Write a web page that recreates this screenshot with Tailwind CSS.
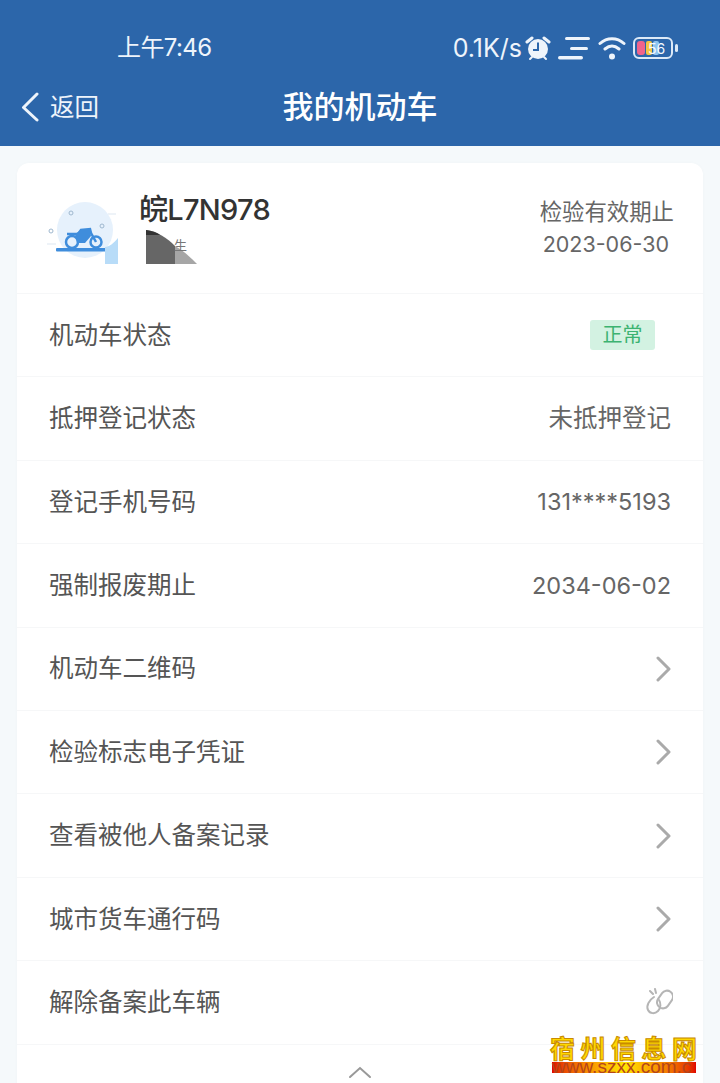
<!DOCTYPE html>
<html lang="zh-CN">
<head>
  <meta charset="UTF-8" />
  <title>我的机动车</title>
  <script src="https://cdn.jsdelivr.net/npm/@tailwindcss/browser@4"></script>
</head>
<body class="bg-[#f5f9fb] h-[1083px] overflow-hidden relative font-['Inter','Noto_Sans_CJK_SC',sans-serif] text-[#555]">

  <!-- header -->
  <header class="bg-[#2c66aa] h-[146px] text-white relative">
    <div class="h-[68px] pt-[28px] pl-[117px] pr-[41px] flex items-center justify-between text-[#eef4fb]">
      <span class="text-[24px] leading-none tracking-[-0.6px]">上午7:46</span>
      <div class="flex items-center">
        <span class="text-[25px] leading-none">0.1K/s</span>
        <svg class="ml-[3px] w-[26px] h-[26px]" viewBox="0 0 26 26">
          <circle cx="13" cy="14" r="10" fill="#eef4fb"/>
          <path d="M2 7l5-4M24 7l-5-4" stroke="#eef4fb" stroke-width="3" stroke-linecap="round"/>
          <path d="M5 24l2-2M21 24l-2-2" stroke="#eef4fb" stroke-width="2" stroke-linecap="round"/>
          <path d="M13 7.500V15H8" fill="none" stroke="#2c66aa" stroke-width="2"/>
        </svg>
        <svg class="ml-[7px] w-[33px] h-[26px]" viewBox="0 0 33 26">
          <rect x="7" y="2" width="25" height="3" rx="1.500" fill="#eef4fb"/>
          <rect x="12" y="12" width="18" height="3" rx="1.500" fill="#eef4fb"/>
          <rect x="0" y="21" width="25" height="3.500" rx="1.700" fill="#eef4fb"/>
        </svg>
        <svg class="ml-[7px] w-[28px] h-[26px]" viewBox="0 0 28 26">
          <path d="M2 8.500C9 2 19 2 26 8.500M7 14c4.500-3.800 9.500-3.800 14 0" fill="none" stroke="#eef4fb" stroke-width="3" stroke-linecap="round"/>
          <circle cx="14" cy="21.500" r="3" fill="#eef4fb"/>
        </svg>
        <svg class="ml-[7px] w-[46px] h-[24px]" viewBox="0 0 46 24">
          <rect x="1" y="2" width="38" height="20" rx="5" fill="none" stroke="#dce9f7" stroke-width="2"/>
          <rect x="4" y="5" width="8" height="14" rx="3" fill="#f0638c"/>
          <rect x="13" y="5" width="6" height="14" rx="2" fill="#f4c542"/>
          <rect x="20" y="5" width="6" height="14" rx="2" fill="#8cc4f0"/>
          <text x="15" y="17.500" font-size="14" fill="#f4f8fd" font-family="Inter">56</text>
          <rect x="42" y="8" width="3" height="8" rx="1.500" fill="#dce9f7"/>
        </svg>
      </div>
    </div>
    <div class="h-[78px] relative flex items-center justify-center">
      <a class="absolute left-[20px] top-[19px] flex items-center gap-[10px] text-[24.500px] leading-[40px] text-[#eef4fb]">
        <svg class="w-[20px] h-[30px]" viewBox="0 0 20 30">
          <path d="M17 2L3.500 15.500 17 28" fill="none" stroke="#eef4fb" stroke-width="3" stroke-linecap="round" stroke-linejoin="round"/>
        </svg>
        返回
      </a>
      <h1 class="text-[31px] font-medium leading-[40px]">我的机动车</h1>
    </div>
  </header>

  <!-- card -->
  <main class="mx-[17px] mt-[17px] bg-white rounded-t-[12px] h-[940px] shadow-[0_0_4px_rgba(0,0,0,0.02)]">
    <div class="h-[131px] pl-[28px] pr-[29px] flex justify-between border-b border-[#f6f7f8]">
      <div class="flex">
        <svg class="mt-[34px] w-[76px] h-[70px]" viewBox="0 0 76 70">
          <circle cx="40" cy="33" r="28" fill="#e6f1fc"/>
          <circle cx="26" cy="16" r="2" fill="none" stroke="#9fb8cf"/>
          <circle cx="57" cy="29" r="2" fill="none" stroke="#9fb8cf"/>
          <circle cx="6" cy="34" r="2" fill="none" stroke="#9fb8cf"/>
          <path d="M2 47h9M63 17h8" stroke="#eef3f8" stroke-width="2"/>
          <rect x="11" y="51" width="56" height="3.500" rx="1" fill="#3f8ddc"/>
          <circle cx="27" cy="45" r="6" fill="none" stroke="#3f8ddc" stroke-width="2.500"/>
          <circle cx="51" cy="45" r="5.500" fill="none" stroke="#3f8ddc" stroke-width="2.500"/>
          <path d="M22 37h11l3-4 9-1 1 4 5 9" fill="none" stroke="#3f8ddc" stroke-width="2.500"/>
          <path d="M30 37l6-4h9l1 6-6 7h-8z" fill="#3f8ddc"/>
          <path d="M60 67V50c4 0 9-4 13-9v26z" fill="#b8dcf8"/>
        </svg>
        <div class="ml-[18px] pt-[29px]">
          <div class="text-[29px] leading-[36px] font-medium tracking-[-0.7px] text-[#333]">皖L7N978</div>
          <svg class="ml-[7px] mt-[2px] w-[56px] h-[36px]" viewBox="0 0 56 36">
            <path d="M0 0c11 1 21 8 29 16v18H0z" fill="#666"/>
            <path d="M0 0c6 1 10 2 14 5H0z" fill="#333"/>
            <path d="M29 16c9 5 16 12 22 18H29z" fill="#a6a6a6"/>
            <text x="28" y="20" font-size="13" fill="#777" font-family="Noto Sans CJK SC">生</text>
          </svg>
        </div>
      </div>
      <div class="pt-[33px] text-right">
        <div class="text-[22.400px] leading-[32px] text-[#666]">检验有效期止</div>
        <div class="text-[21.500px] leading-[32px] text-[#666] pr-[5px]">2023-06-30</div>
      </div>
    </div>

    <ul class="text-[24.500px]">
      <li class="h-[83.400px] pl-[32px] pr-[48px] flex items-center justify-between border-b border-[#f6f7f8]">
        <span>机动车状态</span>
        <span class="w-[65px] h-[30px] rounded-[3px] bg-[#d3f2e2] text-[#3cb371] text-[20px] flex items-center justify-center">正常</span>
      </li>
      <li class="h-[83.400px] pl-[32px] pr-[32px] flex items-center justify-between border-b border-[#f6f7f8]">
        <span>抵押登记状态</span>
        <span class="text-[#666]">未抵押登记</span>
      </li>
      <li class="h-[83.400px] pl-[32px] pr-[32px] flex items-center justify-between border-b border-[#f6f7f8]">
        <span>登记手机号码</span>
        <span class="text-[#666] text-[23.500px]">131****5193</span>
      </li>
      <li class="h-[83.400px] pl-[32px] pr-[32px] flex items-center justify-between border-b border-[#f6f7f8]">
        <span>强制报废期止</span>
        <span class="text-[#666] text-[23.500px]">2034-06-02</span>
      </li>
      <li class="h-[83.400px] pl-[32px] pr-[32px] flex items-center justify-between border-b border-[#f6f7f8]">
        <span>机动车二维码</span>
        <svg class="w-[16px] h-[28px]" viewBox="0 0 16 28"><path d="M3 3l11 11L3 25" fill="none" stroke="#aaa" stroke-width="3" stroke-linecap="round" stroke-linejoin="round"/></svg>
      </li>
      <li class="h-[83.400px] pl-[32px] pr-[32px] flex items-center justify-between border-b border-[#f6f7f8]">
        <span>检验标志电子凭证</span>
        <svg class="w-[16px] h-[28px]" viewBox="0 0 16 28"><path d="M3 3l11 11L3 25" fill="none" stroke="#aaa" stroke-width="3" stroke-linecap="round" stroke-linejoin="round"/></svg>
      </li>
      <li class="h-[83.400px] pl-[32px] pr-[32px] flex items-center justify-between border-b border-[#f6f7f8]">
        <span>查看被他人备案记录</span>
        <svg class="w-[16px] h-[28px]" viewBox="0 0 16 28"><path d="M3 3l11 11L3 25" fill="none" stroke="#aaa" stroke-width="3" stroke-linecap="round" stroke-linejoin="round"/></svg>
      </li>
      <li class="h-[83.400px] pl-[32px] pr-[32px] flex items-center justify-between border-b border-[#f6f7f8]">
        <span>城市货车通行码</span>
        <svg class="w-[16px] h-[28px]" viewBox="0 0 16 28"><path d="M3 3l11 11L3 25" fill="none" stroke="#aaa" stroke-width="3" stroke-linecap="round" stroke-linejoin="round"/></svg>
      </li>
      <li class="h-[83.400px] pl-[32px] pr-[30px] flex items-center justify-between border-b border-[#f6f7f8]">
        <span>解除备案此车辆</span>
        <svg class="w-[28px] h-[28px]" viewBox="0 0 28 28" fill="none" stroke="#b5b5b5" stroke-width="2" stroke-linecap="round">
          <rect x="14" y="2" width="12" height="19" rx="6" transform="rotate(35 20 11.500)"/>
          <path d="M9 9C4 12 1 18 3 22c2 4 7 4 10 1 3-3 3-8 1-11"/>
          <path d="M5 3l3 3M10 1l1 4"/>
        </svg>
      </li>
    </ul>
    <div class="flex justify-center pt-[20px]">
      <svg class="w-[24px] h-[14px]" viewBox="0 0 24 14"><path d="M2 12L12 3l10 9" fill="none" stroke="#999" stroke-width="2" stroke-linecap="round"/></svg>
    </div>
  </main>

  <!-- watermark -->
  <div class="absolute left-[550px] top-[1032px] w-[146px]">
    <div class="flex gap-[5.500px] text-[25px] leading-[30px] font-bold font-['Noto_Sans_CJK_SC',sans-serif] text-[#ffd800] [-webkit-text-stroke:1px_#c98a00]">
      <span>宿</span><span>州</span><span>信</span><span>息</span><span>网</span>
    </div>
    <div class="h-[11px] w-[144px] ml-[2px] whitespace-nowrap text-[19px] leading-[10px] font-['Liberation_Sans',sans-serif] text-[#b5441a] bg-gradient-to-r from-[#e00000] via-[#ffe600] to-[#e00000]">www.szxx.com.c</div>
  </div>

</body>
</html>
